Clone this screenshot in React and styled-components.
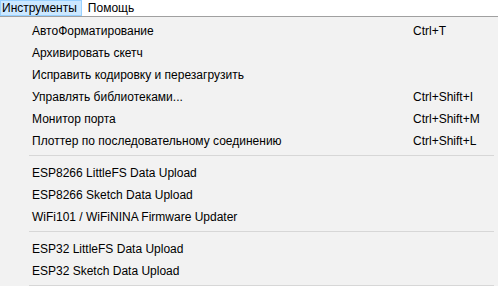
import React from "react";
import styled, { createGlobalStyle } from "styled-components";

const GlobalStyle = createGlobalStyle`
	html, body {
		margin: 0;
		padding: 0;
		background: #ffffff;
		overflow: hidden;
	}
	body {
		font-family: "Liberation Sans", Arial, sans-serif;
		font-size: 12px;
		color: #000000;
	}
`;

const Page = styled.div`
	width: 498px;
	height: 287px;
	overflow: hidden;
`;

const MenuBar = styled.div`
	display: flex;
	gap: 4px;
	height: 16px;
	background: #ffffff;
`;

const BarItem = styled.div`
	display: flex;
	align-items: center;
	height: 16px;
	padding: 0 4px 0 1px;
	box-sizing: border-box;
	line-height: 14px;
	border: 1px solid ${props => (props.active ? "#99d1ff" : "transparent")};
	background: ${props => (props.active ? "#cce8ff" : "transparent")};
`;

const Dropdown = styled.div`
	width: 502px;
	margin-left: -1px;
	background: #f2f2f2;
	border-top: 1px solid #a0a0a0;
	padding-top: 3px;
`;

const Item = styled.div`
	display: grid;
	grid-template-columns: 381px auto;
	height: 22px;
	line-height: 22px;
	padding-left: 33px;
	white-space: nowrap;
`;

const Shortcut = styled.span`
	color: #000000;
`;

const Separator = styled.div`
	height: 1px;
	background: #d7d7d7;
	margin: 3px 7px 6px 30px;
`;

const groups = [
	[
		["АвтоФорматирование", "Ctrl+T"],
		["Архивировать скетч", ""],
		["Исправить кодировку и перезагрузить", ""],
		["Управлять библиотеками...", "Ctrl+Shift+I"],
		["Монитор порта", "Ctrl+Shift+M"],
		["Плоттер по последовательному соединению", "Ctrl+Shift+L"],
	],
	[
		["ESP8266 LittleFS Data Upload", ""],
		["ESP8266 Sketch Data Upload", ""],
		["WiFi101 / WiFiNINA Firmware Updater", ""],
	],
	[
		["ESP32 LittleFS Data Upload", ""],
		["ESP32 Sketch Data Upload", ""],
	],
];

const App = () => {
	return (
		<>
			<GlobalStyle />
			<Page>
				<MenuBar>
					<BarItem active>Инструменты</BarItem>
					<BarItem>Помощь</BarItem>
				</MenuBar>
				<Dropdown>
					{groups.map((group, gi) => (
						<React.Fragment key={gi}>
							{group.map(([label, keys]) => (
								<Item key={label}>
									<span>{label}</span>
									<Shortcut>{keys}</Shortcut>
								</Item>
							))}
							<Separator />
						</React.Fragment>
					))}
				</Dropdown>
			</Page>
		</>
	);
};

export default App;
